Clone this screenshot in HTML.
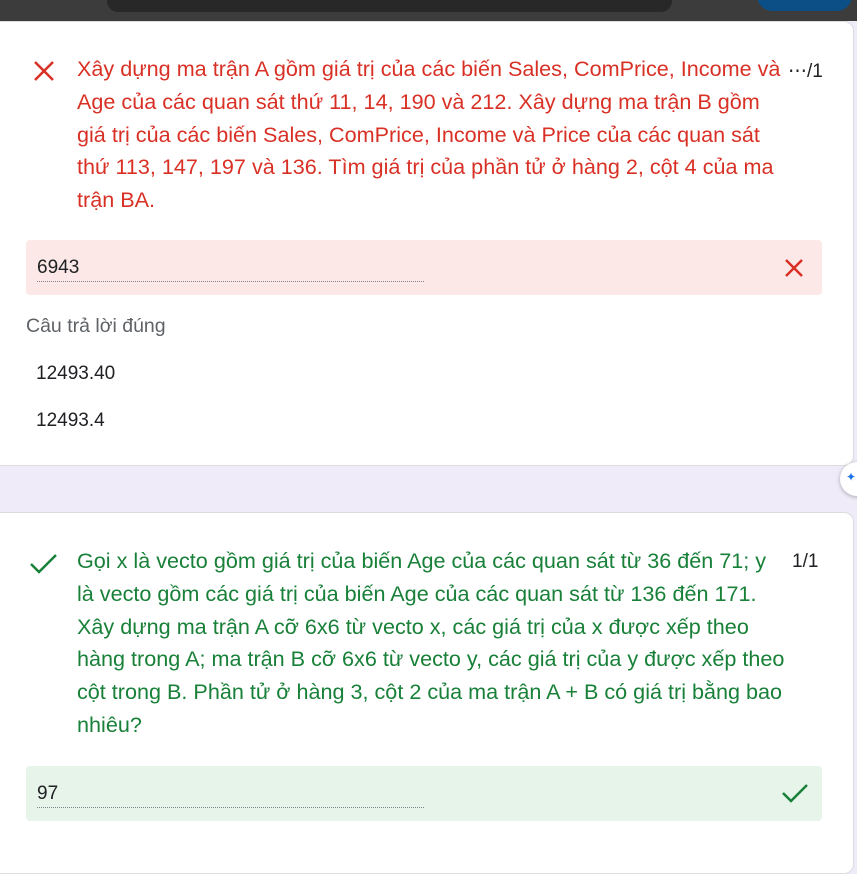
<!DOCTYPE html>
<html><head><meta charset="utf-8"><style>
body{margin:0;width:857px;height:854px;overflow:hidden;background:#f0ebf8;font-family:"Liberation Sans",Arial,sans-serif;position:relative}
.top{position:absolute;left:0;top:0;width:857px;height:21px;background:#3c3c3c}
.pill{position:absolute;left:107px;top:-10px;width:565px;height:22px;background:#282828;border-radius:12px}
.blue{position:absolute;left:757px;top:-20px;width:95px;height:31px;background:#0b4f86;border-radius:16px}
.card{position:absolute;left:-10px;width:862px;background:#fff;border-radius:0 10px 10px 0;border:1px solid #dadce0}
.q{position:absolute;left:77px;font-size:21.6px;line-height:32.8px;white-space:nowrap}
.pts{position:absolute;font-size:19px;color:#202124}
.box{position:absolute;left:26px;width:796px;height:55px;border-radius:4px}
.val{position:absolute;left:11px;top:17px;font-size:19px;color:#202124}
.ul{position:absolute;left:11px;top:41px;width:387px;border-top:1px dotted #80868b}
.lab{position:absolute;left:26px;font-size:19.5px;color:#5f6368}
.ans{position:absolute;left:36px;font-size:19px;color:#202124}
</style></head><body>
<div class="top"><div class="pill"></div><div class="blue"></div></div>
<div class="card" style="top:21px;height:443px"></div>
<div class="card" style="top:512px;height:360px"></div>
<svg style="position:absolute;left:33px;top:60px" width="22" height="22"><path d="M2 2L20 20M20 2L2 20" stroke="#d93025" stroke-width="2.5"/></svg>
<div class="q" style="top:53px;color:#d93025">Xây dựng ma trận A gồm giá trị của các biến Sales, ComPrice, Income và<br>Age của các quan sát thứ 11, 14, 190 và 212. Xây dựng ma trận B gồm<br>giá trị của các biến Sales, ComPrice, Income và Price của các quan sát<br>thứ 113, 147, 197 và 136. Tìm giá trị của phần tử ở hàng 2, cột 4 của ma<br>trận BA.</div>
<div class="pts" style="left:788px;top:60px">⋯/1</div>
<div class="box" style="top:240px;background:#fce8e6"><div class="val">6943</div><div class="ul"></div>
<svg style="position:absolute;left:758px;top:18px" width="20" height="20"><path d="M2 2L18 18M18 2L2 18" stroke="#d93025" stroke-width="2.5"/></svg></div>
<div class="lab" style="top:315px">Câu trả lời đúng</div>
<div class="ans" style="top:363px">12493.40</div>
<div class="ans" style="top:410px">12493.4</div>
<div style="position:absolute;left:840px;top:462px;width:34px;height:34px;border-radius:50%;background:#fff;box-shadow:0 1px 4px rgba(0,0,0,.3)"><span style="position:absolute;left:6px;top:8px;color:#1a73e8;font-size:12px">✦</span></div>
<svg style="position:absolute;left:29px;top:552px" width="30" height="24"><path d="M2 12L10 20L27 3" fill="none" stroke="#188038" stroke-width="2.5"/></svg>
<div class="q" style="top:545px;color:#188038">Gọi x là vecto gồm giá trị của biến Age của các quan sát từ 36 đến 71; y<br>là vecto gồm các giá trị của biến Age của các quan sát từ 136 đến 171.<br>Xây dựng ma trận A cỡ 6x6 từ vecto x, các giá trị của x được xếp theo<br>hàng trong A; ma trận B cỡ 6x6 từ vecto y, các giá trị của y được xếp theo<br>cột trong B. Phần tử ở hàng 3, cột 2 của ma trận A + B có giá trị bằng bao<br>nhiêu?</div>
<div class="pts" style="left:792px;top:551px">1/1</div>
<div class="box" style="top:766px;background:#e6f4ea"><div class="val">97</div><div class="ul"></div>
<svg style="position:absolute;left:755px;top:16px" width="28" height="22"><path d="M2 11L10 19L26 3" fill="none" stroke="#188038" stroke-width="2.5"/></svg></div>
</body></html>
